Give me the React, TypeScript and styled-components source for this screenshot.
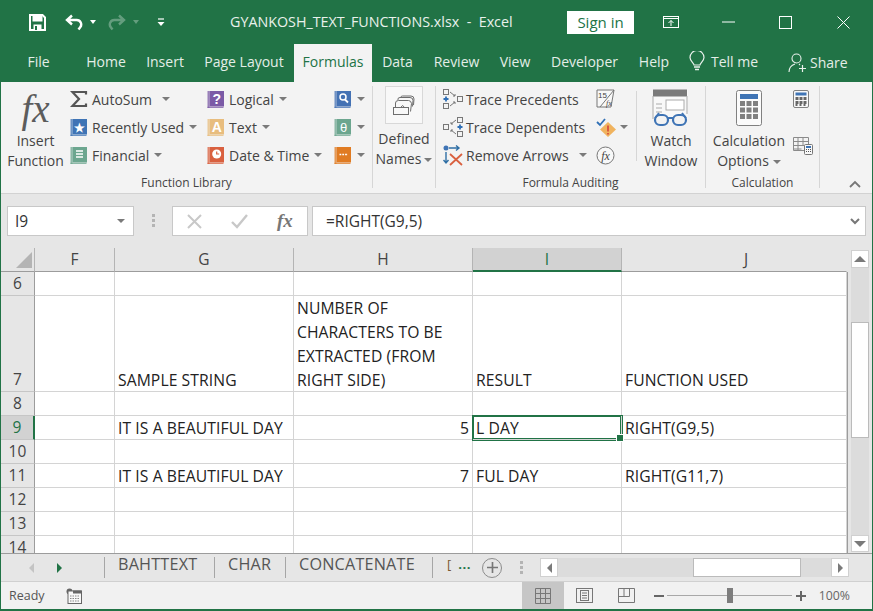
import React from 'react';
import styled, { createGlobalStyle } from 'styled-components';

const GREEN = '#217346';
const FONT = '"Open Sans", "Noto Sans", sans-serif';

const GlobalStyle = createGlobalStyle`
    html, body { margin: 0; padding: 0; background: ${GREEN}; }
    * { box-sizing: border-box; }
`;

const Window = styled.div`
    width: 873px;
    height: 611px;
    display: flex;
    flex-direction: column;
    border: 1px solid ${GREEN};
    border-top: 0;
    border-bottom-width: 2px;
    font-family: ${FONT};
    font-size: 14px;
    color: #444;
    overflow: hidden;
    background: #e6e6e6;
`;

/* title bar */
const TitleBar = styled.div`
    height: 44px;
    flex: none;
    display: flex;
    align-items: center;
    background: ${GREEN};
    color: #e9f1ec;
`;
const QuickAccess = styled.div`
    width: 229px;
    flex: none;
    display: flex;
    align-items: center;
    padding-left: 28px;
`;
const Title = styled.div`
    width: 337px;
    flex: none;
    font-size: 14.3px;
    padding-bottom: 2px;
    white-space: pre;
`;
const SignIn = styled.div`
    width: 67px;
    height: 23px;
    flex: none;
    background: #fff;
    color: ${GREEN};
    font-size: 15px;
    line-height: 22px;
    text-align: center;
    margin-right: 8px;
`;
const WinButton = styled.div`
    width: 57.5px;
    flex: none;
    display: flex;
    justify-content: center;
    align-items: center;
`;

/* tabs */
const TabBar = styled.div`
    height: 38px;
    flex: none;
    display: flex;
    background: ${GREEN};
    color: #e4eee8;
    font-size: 14px;
`;
const Tab = styled.div<{ $w: number; $active?: boolean }>`
    width: ${({ $w }) => $w}px;
    flex: none;
    padding-top: 8px;
    text-align: center;
    white-space: nowrap;
    ${({ $active }) => $active && `background: #f3f3f3; color: ${GREEN};`}
`;
const TellMe = styled.div`
    width: 99px;
    flex: none;
    display: flex;
    align-items: flex-start;
    gap: 6px;
    padding-top: 8px;
    margin-left: 10px;
    white-space: nowrap;
`;
const Share = styled(TellMe)`
    width: auto;
    margin-left: 0;
    gap: 2px;
    padding-top: 9px;
`;

/* ribbon */
const Ribbon = styled.div`
    height: 112px;
    flex: none;
    display: flex;
    background: #f3f3f3;
    border-bottom: 1px solid #d2d2d2;
`;
const Group = styled.div<{ $w: number }>`
    width: ${({ $w }) => $w}px;
    flex: none;
    display: flex;
    flex-direction: column;
    position: relative;
    &::after {
        content: '';
        position: absolute;
        right: 0;
        top: 4px;
        bottom: 5px;
        width: 1px;
        background: #d6d6d6;
    }
`;
const GroupBody = styled.div`
    height: 91px;
    display: flex;
    padding-top: 3px;
`;
const GroupLabel = styled.div`
    font-size: 12px;
    line-height: 20px;
    text-align: center;
    color: #444;
    padding-right: 1px;
`;
const Column = styled.div<{ $w: number; $pad?: number }>`
    width: ${({ $w }) => $w}px;
    padding-left: ${({ $pad }) => $pad ?? 0}px;
    flex: none;
`;
const SmallRow = styled.div<{ $shift?: number; $gap?: number }>`
    height: 28px;
    display: flex;
    align-items: center;
    gap: ${({ $gap }) => $gap ?? 4}px;
    white-space: nowrap;
    font-size: 14px;
    ${({ $shift }) => $shift && `margin-top: ${$shift}px;`}
`;
const LargeButton = styled.div<{ $w: number }>`
    width: ${({ $w }) => $w}px;
    flex: none;
    display: flex;
    flex-direction: column;
    align-items: center;
    line-height: 20px;
    font-size: 14px;
    white-space: nowrap;
`;
const LargeIcon = styled.div`
    height: 46px;
    display: flex;
    align-items: center;
    justify-content: center;
`;
const FxGlyph = styled.span`
    font-family: 'Liberation Serif', serif;
    font-style: italic;
    font-size: 39px;
    line-height: 45px;
    color: #5c5c5c;
`;
const Caret = styled.span<{ $gap?: number; $after?: number }>`
    display: inline-block;
    width: 0;
    height: 0;
    margin-left: ${({ $gap }) => $gap ?? 1}px;
    margin-right: ${({ $after }) => $after ?? 0}px;
    border-left: 4px solid transparent;
    border-right: 4px solid transparent;
    border-top: 4px solid #7a7a7a;
    vertical-align: middle;
`;
const NamesBox = styled.div`
    width: 38px;
    height: 38px;
    display: flex;
    align-items: center;
    justify-content: center;
    background: #f8f8f8;
    border: 1px solid #d8d8d8;
`;
const NamesIconWrap = styled.div`
    height: 44px;
    padding-top: 1px;
`;
const Divider = styled.div`
    width: 1px;
    height: 70px;
    margin: 6px 0 0 0;
    background: #d6d6d6;
    flex: none;
`;
const CollapseWrap = styled.div`
    flex: 1;
    display: flex;
    justify-content: flex-end;
    align-items: flex-end;
    padding: 0 11px 5px 0;
`;

/* formula bar */
const FormulaBar = styled.div`
    height: 54px;
    flex: none;
    display: flex;
    align-items: flex-start;
    padding: 12px 6px 0 6px;
    background: #e6e6e6;
`;
const Field = styled.div<{ $w?: number }>`
    ${({ $w }) => ($w ? `width: ${$w}px; flex: none;` : 'flex: 1;')}
    height: 30px;
    display: flex;
    align-items: center;
    background: #fff;
    border: 1px solid #c8c8c8;
    color: #333;
    font-size: 15.5px;
`;
const NameText = styled.span`
    flex: 1;
    padding-left: 7px;
`;
const Grip = styled.div`
    width: 38px;
    flex: none;
    display: flex;
    flex-direction: column;
    align-items: center;
    gap: 2px;
    padding-top: 8px;
    span {
        width: 3px;
        height: 3px;
        background: #b4b4b4;
    }
`;
const FormulaButtons = styled(Field)`
    padding-left: 14px;
    margin-right: 4px;
    gap: 29px;
`;
const FormulaFx = styled.span`
    font-family: 'Liberation Serif', serif;
    font-style: italic;
    font-weight: bold;
    font-size: 19px;
    color: #777;
`;
const FormulaText = styled.span`
    flex: 1;
    padding-left: 13px;
`;
const FieldChevron = styled.span`
    display: flex;
    margin-right: 5px;
`;

/* sheet */
const SheetArea = styled.div`
    flex: 1;
    min-height: 0;
    display: flex;
`;
const Sheet = styled.div`
    width: 846px;
    flex: none;
    overflow: hidden;
    display: grid;
    grid-template-columns: 34px 80px 179px 179px 149px 225px;
    grid-auto-rows: min-content;
    align-content: start;
    background: #fff;
    color: #222;
    font-size: 15.7px;
    letter-spacing: 0.08px;
`;
const Corner = styled.div`
    height: 24px;
    background: #e6e6e6;
    border-bottom: 1px solid #9c9c9c;
    display: flex;
    justify-content: flex-end;
    align-items: flex-end;
    padding: 0 2px 3px 0;
    border-right: 1px solid #b4b4b4;
`;
const ColHead = styled.div<{ $selected?: boolean; $last?: boolean }>`
    height: 24px;
    line-height: 23px;
    text-align: center;
    font-size: 15.5px;
    color: ${({ $selected }) => ($selected ? GREEN : '#444')};
    background: ${({ $selected }) => ($selected ? '#d2d2d2' : '#e6e6e6')};
    border-right: 1px solid ${({ $last }) => ($last ? 'transparent' : '#b4b4b4')};
    border-bottom: ${({ $selected }) => ($selected ? `2px solid ${GREEN}` : '1px solid #9c9c9c')};
    padding-left: ${({ $last }) => ($last ? 24 : 0)}px;
`;
const RowHead = styled.div<{ $selected?: boolean; $h: number }>`
    height: ${({ $h }) => $h}px;
    display: flex;
    align-items: flex-end;
    justify-content: center;
    line-height: 23px;
    font-size: 15.5px;
    color: ${({ $selected }) => ($selected ? GREEN : '#444')};
    background: ${({ $selected }) => ($selected ? '#d2d2d2' : '#e6e6e6')};
    border-bottom: 1px solid #c6c6c6;
    border-right: ${({ $selected }) => ($selected ? `2px solid ${GREEN}` : '1px solid #9c9c9c')};
`;
const Cell = styled.div<{ $h: number; $right?: boolean; $selected?: boolean }>`
    height: ${({ $h }) => $h}px;
    position: relative;
    display: flex;
    align-items: flex-end;
    justify-content: ${({ $right }) => ($right ? 'flex-end' : 'flex-start')};
    padding: 0 3px;
    line-height: 24px;
    white-space: pre-line;
    border-right: 1px solid #d4d4d4;
    border-bottom: 1px solid #d4d4d4;
    ${({ $selected }) =>
        $selected &&
        `
        box-shadow: 0 0 0 1px ${GREEN}, inset 0 0 0 1px ${GREEN};
        z-index: 1;
        &::after {
            content: '';
            position: absolute;
            right: -3px;
            bottom: -3px;
            width: 6px;
            height: 6px;
            background: ${GREEN};
            border: 1px solid #fff;
        }
    `}
`;
const CellText = styled.span`
    margin-bottom: -1px;
`;
const LastColCap = styled.div`
    width: 1px;
    flex: none;
    background: #9c9c9c;
    margin-top: 24px;
`;

const VScroll = styled.div`
    flex: 1;
    display: flex;
    flex-direction: column;
    padding: 2px 3px 1px 3px;
    background: #e6e6e6;
`;
const ScrollButton = styled.div<{ $w?: number; $h?: number }>`
    ${({ $w }) => $w && `width: ${$w}px;`}
    ${({ $h }) => $h && `height: ${$h}px;`}
    flex: none;
    display: flex;
    align-items: center;
    justify-content: center;
    background: #fff;
    border: 1px solid #d0d0d0;
`;
const VTrack = styled.div`
    flex: 1;
    background: #dcdcdc;
    display: flex;
    flex-direction: column;
`;
const VThumb = styled.div`
    height: 116px;
    margin-top: 54px;
    background: #fff;
    border: 1px solid #bbb;
`;
const Arrow = styled.span<{ $dir: 'up' | 'down' | 'left' | 'right'; $color?: string }>`
    width: 0;
    height: 0;
    border-style: solid;
    ${({ $dir, $color }) => {
        const c = $color ?? '#7a7a7a';
        if ($dir === 'up') return `border-width: 0 6px 6px 6px; border-color: transparent transparent ${c} transparent;`;
        if ($dir === 'down') return `border-width: 6px 6px 0 6px; border-color: ${c} transparent transparent transparent;`;
        if ($dir === 'left') return `border-width: 5px 5px 5px 0; border-color: transparent ${c} transparent transparent;`;
        return `border-width: 5px 0 5px 5px; border-color: transparent transparent transparent ${c};`;
    }}
`;

/* sheet tabs */
const SheetTabs = styled.div`
    height: 29px;
    flex: none;
    display: flex;
    align-items: center;
    background: #e6e6e6;
    border-top: 1px solid #9c9c9c;
    border-bottom: 1px solid #d0d0d0;
`;
const TabNav = styled.div`
    width: 103px;
    height: 100%;
    flex: none;
    display: flex;
    align-items: center;
    gap: 23px;
    padding-left: 28px;
`;
const SheetTab = styled.div<{ $w: number }>`
    width: ${({ $w }) => $w}px;
    height: 21px;
    flex: none;
    border-left: 1px solid #a6a6a6;
    padding-left: 13px;
    font-size: 16.2px;
    letter-spacing: 0.2px;
    line-height: 15px;
    color: #555;
    white-space: nowrap;
`;
const MoreTabs = styled.div`
    width: 43px;
    height: 21px;
    flex: none;
    border-left: 1px solid #a6a6a6;
    padding-left: 14px;
    display: flex;
    gap: 7px;
    font-size: 13px;
    line-height: 15px;
    color: #7a5a30;
    span {
        color: ${GREEN};
        font-weight: 700;
        letter-spacing: 0.5px;
    }
`;
const AddSheet = styled.div`
    width: 20px;
    height: 20px;
    flex: none;
    margin-left: 7px;
    border: 1px solid #8c8c8c;
    border-radius: 50%;
    display: flex;
    align-items: center;
    justify-content: center;
`;
const TabGrip = styled(Grip)`
    width: 38px;
    gap: 2px;
    padding-top: 0;
`;
const HScroll = styled.div`
    width: 309px;
    height: 19px;
    flex: none;
    display: flex;
    background: #dcdcdc;
`;
const HThumb = styled.div`
    width: 108px;
    height: 19px;
    margin-left: 135px;
    background: #fff;
    border: 1px solid #bbb;
`;
const HSpacer = styled.div`
    flex: 1;
`;

/* status bar */
const StatusBar = styled.div`
    flex: none;
    height: 27px;
    display: flex;
    align-items: center;
    background: #f1f1f1;
    color: #555;
    font-size: 12.5px;
`;
const Ready = styled.span`
    width: 65px;
    flex: none;
    padding-left: 8px;
`;
const StatusSpacer = styled.div`
    flex: 1;
`;
const ViewButton = styled.div<{ $active?: boolean; $w: number }>`
    width: ${({ $w }) => $w}px;
    height: 100%;
    flex: none;
    display: flex;
    align-items: center;
    justify-content: center;
    background: ${({ $active }) => ($active ? '#c6c6c6' : 'transparent')};
`;
const ZoomOut = styled.span`
    display: flex;
    margin-left: 6px;
`;
const ZoomSlider = styled.div`
    width: 125px;
    height: 1px;
    flex: none;
    margin: 0 4px 0 3px;
    background: #a8a8a8;
    position: relative;
`;
const ZoomThumb = styled.div`
    position: absolute;
    left: 60px;
    top: -7px;
    width: 6px;
    height: 15px;
    background: #7d7d7d;
`;
const ZoomLabel = styled.span`
    flex: none;
    margin-left: 13px;
    padding-right: 22px;
    white-space: nowrap;
    color: #666;
    font-size: 12.3px;
`;

/* icons */
const Book = ({ color, children }: { color: string; children?: React.ReactNode }) => (
    <svg width="18" height="19" viewBox="0 0 18 19">
        <rect x="0.5" y="1" width="2" height="17" fill={color} opacity="0.75" />
        <rect x="0.5" y="16.8" width="16" height="1.2" fill={color} opacity="0.75" />
        <rect x="2.5" y="1" width="14.5" height="15.5" fill={color} />
        {children}
    </svg>
);
const BookLetter = ({ ch, size = 14, bold = true }: { ch: string; size?: number; bold?: boolean }) => (
    <text x="9.7" y="13.5" fontSize={size} fontWeight={bold ? 700 : 400} fill="#fff" textAnchor="middle" fontFamily="Liberation Sans">
        {ch}
    </text>
);

const Sigma = () => (
    <svg width="18" height="18" viewBox="0 0 18 18">
        <path d="M16 4.5V2H2.5L9 9l-6.5 7H16v-2.5" fill="none" stroke="#555" strokeWidth="2.2" />
    </svg>
);
const SaveIcon = () => (
    <svg width="17" height="17" viewBox="0 0 17 17" style={{ marginRight: 19 }}>
        <path d="M1 1h12.5L16 3.5V16H1z" fill="none" stroke="#fff" strokeWidth="2" />
        <rect x="3.5" y="1.5" width="10" height="6" fill="#fff" />
        <rect x="4.5" y="10.5" width="8" height="5.5" fill="#fff" />
        <rect x="6" y="12" width="2" height="4" fill={GREEN} />
    </svg>
);
const UndoIcon = ({ faded }: { faded?: boolean }) => (
    <svg
        width="18"
        height="17"
        viewBox="0 0 18 17"
        style={{ transform: faded ? 'scaleX(-1)' : undefined, opacity: faded ? 0.3 : 1 }}
    >
        <path d="M7 1.5L2 6l5 4.5M2 6h9.5a4.5 4.5 0 0 1 3.5 7.5L13.5 15.5" fill="none" stroke="#fff" strokeWidth="2.4" />
    </svg>
);
const QatCaret = styled.span<{ $faded?: boolean; $m: number }>`
    width: 0;
    height: 0;
    margin: 0 ${({ $m }) => $m}px 0 7px;
    border-left: 3.5px solid transparent;
    border-right: 3.5px solid transparent;
    border-top: 4px solid #fff;
    opacity: ${({ $faded }) => ($faded ? 0.3 : 1)};
`;
const Customize = () => (
    <svg width="8" height="9" viewBox="0 0 8 9">
        <path d="M1 1h6" stroke="#fff" strokeWidth="1.2" />
        <path d="M0.5 4h7L4 8z" fill="#fff" />
    </svg>
);
const RibbonDisplayIcon = () => (
    <svg width="16" height="13" viewBox="0 0 16 13">
        <rect x="0.5" y="0.5" width="15" height="11" fill="none" stroke="#fff" />
        <path d="M1 2.5h14M8 10V4.5M5.5 7L8 4.5 10.5 7" fill="none" stroke="#fff" />
    </svg>
);
const MinIcon = () => (
    <svg width="13" height="2" viewBox="0 0 13 2">
        <path d="M0 1h13" stroke="#fff" />
    </svg>
);
const MaxIcon = () => (
    <svg width="13" height="13" viewBox="0 0 13 13">
        <rect x="0.5" y="0.5" width="12" height="12" fill="none" stroke="#fff" />
    </svg>
);
const CloseIcon = () => (
    <svg width="13" height="13" viewBox="0 0 13 13">
        <path d="M0.5 0.5l12 12M12.5 0.5l-12 12" stroke="#fff" />
    </svg>
);
const BulbIcon = () => (
    <svg width="16" height="21" viewBox="0 0 16 21" style={{ marginTop: -1 }}>
        <path d="M5 14c0-2-4-4-4-7.5A7 7 0 0 1 15 6.5C15 10 11 12 11 14z" fill="none" stroke="#e9f1ec" strokeWidth="1.2" />
        <path d="M5 16h6M6 18.5h4" stroke="#e9f1ec" strokeWidth="1.4" />
    </svg>
);
const PersonIcon = () => (
    <svg width="20" height="20" viewBox="0 0 20 20">
        <circle cx="8.5" cy="5.5" r="4.5" fill="none" stroke="#e9f1ec" strokeWidth="1.1" />
        <path d="M1 19c0-4 3-7 6-8M11 11l1 1" fill="none" stroke="#e9f1ec" strokeWidth="1.1" />
        <path d="M14.5 12v7M11 15.5h7" stroke="#e9f1ec" strokeWidth="1.2" />
    </svg>
);
const TraceIcon = ({ flip }: { flip?: boolean }) => (
    <svg width="20" height="20" viewBox="0 0 20 20" style={{ transform: flip ? 'scaleX(-1)' : undefined }}>
        <g fill="none" stroke="#777" strokeWidth="1">
            <rect x="0.5" y="0.5" width="5" height="5" />
            <rect x="0.5" y="14.5" width="5" height="5" />
            <rect x="14.5" y="7.5" width="5" height="5" />
            <path d="M7 3l5 4M10 7h2V5M7 17l5-4M10 13h2v2" />
        </g>
        <path d="M3 7.5v5M0.5 10h5" stroke="#2f6fb5" strokeWidth="1.8" />
    </svg>
);
const RemoveArrowsIcon = () => (
    <svg width="21" height="21" viewBox="0 0 21 21">
        <circle cx="3" cy="3" r="2.5" fill="#3f74b5" />
        <path d="M6 3h10M13 0.5L16 3l-3 2.5M3 7v11M0.5 15L3 18l2.5-3" fill="none" stroke="#2f6fa5" strokeWidth="1.4" />
        <path d="M7 9l12 11M19 9L7 20" stroke="#d9603f" strokeWidth="1.8" />
    </svg>
);
const ShowFormulasIcon = () => (
    <svg width="20" height="20" viewBox="0 0 20 20">
        <path d="M1 1h17L15 18H1z" fill="#f8f8f8" stroke="#777" />
        <path d="M18 1L4 18" stroke="#777" />
        <text x="2" y="9" fontSize="8" fill="#444" fontFamily="Liberation Sans">15</text>
        <text x="10" y="17" fontSize="8" fontStyle="italic" fill="#444" fontFamily="Liberation Serif">fx</text>
    </svg>
);
const ErrorCheckIcon = () => (
    <svg width="21" height="19" viewBox="0 0 21 19">
        <path d="M1 4l3 3 5-6" fill="none" stroke="#2f6fb5" strokeWidth="1.8" />
        <path d="M12 4l8 7.5-8 7.5-8-7.5z" fill="#f0b35e" />
        <path d="M12 7.5v6M12 15v1.5" stroke="#d9503f" strokeWidth="1.8" />
    </svg>
);
const EvaluateIcon = () => (
    <svg width="19" height="19" viewBox="0 0 19 19">
        <circle cx="9.5" cy="9.5" r="8.5" fill="#f8f8f8" stroke="#777" />
        <text x="9.5" y="13.5" fontSize="12" fontStyle="italic" fill="#444" textAnchor="middle" fontFamily="Liberation Serif">fx</text>
    </svg>
);
const NamesIcon = () => (
    <svg width="22" height="21" viewBox="0 0 22 21">
        <g fill="none" stroke="#6e6e6e" strokeWidth="1">
            <rect x="0.5" y="12.5" width="15" height="7" fill="#f8f8f8" />
            <path d="M2.5 12V8q0-2.5 3-2.5h10q2.5 0 3 3l-1 8" />
            <path d="M5 5V4q0-1.5 2-1.5h10q3 0 3 3l-.5 6" />
            <path d="M8 2q0-1 1.5-1H18q3 0 3 3l-.5 6" />
            <path d="M8 12q2-3 3 0" />
        </g>
    </svg>
);
const WatchIcon = () => (
    <svg width="38" height="38" viewBox="0 0 38 38">
        <rect x="1" y="0.5" width="35" height="30" fill="#f8f8f8" />
        <rect x="1" y="0.5" width="34" height="7" fill="#7a7a7a" />
        <path d="M1 7v23M35 7v18" stroke="#aaa" fill="none" />
        <path d="M4 15h6M4 19h6M4 23h6" stroke="#aaa" />
        <rect x="14" y="11" width="18" height="10" fill="#fff" stroke="#aaa" />
        <rect x="3" y="26" width="13" height="10" rx="5" fill="#f3f3f3" stroke="#3f74b5" strokeWidth="2.2" />
        <rect x="21" y="26" width="13" height="10" rx="5" fill="#f3f3f3" stroke="#3f74b5" strokeWidth="2.2" />
        <path d="M16 29h5M3 29l4-5M34 29l-4-5" stroke="#3f74b5" strokeWidth="2" fill="none" />
    </svg>
);
const CalcGrid = ({ x, y, cell, gap, cols, rows, fill }: { x: number; y: number; cell: number; gap: number; cols: number; rows: number; fill: string }) => (
    <>
        {Array.from({ length: rows * cols }, (_, i) => (
            <rect
                key={i}
                x={x + (i % cols) * (cell + gap)}
                y={y + Math.floor(i / cols) * (cell + gap)}
                width={cell}
                height={cell}
                fill={fill}
            />
        ))}
    </>
);
const CalcIcon = () => (
    <svg width="26" height="36" viewBox="0 0 26 36">
        <rect x="0.5" y="0.5" width="25" height="35" rx="2" fill="#fbfbfb" stroke="#808080" />
        <rect x="4" y="4" width="18" height="5" fill="#3f74b5" />
        <CalcGrid x={4} y={11} cell={5} gap={1.5} cols={3} rows={3} fill="#808080" />
    </svg>
);
const CalcSmallIcon = () => (
    <svg width="16" height="18" viewBox="0 0 16 18">
        <rect x="0.5" y="0.5" width="15" height="17" rx="1.5" fill="#f8f8f8" stroke="#808080" />
        <rect x="2.5" y="2.5" width="11" height="3" fill="#3f74b5" />
        <CalcGrid x={2.5} y={7} cell={3} gap={1} cols={3} rows={2} fill="#666" />
        <CalcGrid x={2.5} y={14} cell={2} gap={2} cols={3} rows={1} fill="#666" />
    </svg>
);
const CalcSheetIcon = () => (
    <svg width="20" height="18" viewBox="0 0 20 18">
        <g fill="none" stroke="#8a8a8a">
            <path d="M0.5 0.5h15v13h-15zM0.5 4.5h15M0.5 8.5h11M0.5 12h8M5 0.5v13M10 0.5v8" />
        </g>
        <rect x="11.5" y="7.5" width="8" height="10" rx="1" fill="#f8f8f8" stroke="#777" />
        <rect x="13" y="9" width="5" height="2" fill="#3f74b5" />
        <CalcGrid x={13} y={12} cell={1} gap={1} cols={3} rows={2} fill="#555" />
    </svg>
);
const ChevronUp = () => (
    <svg width="12" height="8" viewBox="0 0 12 8">
        <path d="M1 7l5-5 5 5" fill="none" stroke="#777" strokeWidth="1.8" />
    </svg>
);
const ChevronDown = () => (
    <svg width="10" height="7" viewBox="0 0 10 7">
        <path d="M1 1l4 4 4-4" fill="none" stroke="#777" strokeWidth="2" />
    </svg>
);
const CrossIcon = () => (
    <svg width="15" height="15" viewBox="0 0 15 15">
        <path d="M1 1l13 13M14 1L1 14" stroke="#c8c8c8" strokeWidth="2" />
    </svg>
);
const TickIcon = () => (
    <svg width="17" height="15" viewBox="0 0 17 15">
        <path d="M1 8l5 5L16 1" fill="none" stroke="#c8c8c8" strokeWidth="2.4" />
    </svg>
);
const CornerTriangle = () => (
    <svg width="16" height="16" viewBox="0 0 16 16">
        <path d="M16 0v16H0z" fill="#b4b4b4" />
    </svg>
);
const MacroIcon = () => (
    <svg width="16" height="16" viewBox="0 0 16 16">
        <circle cx="3.5" cy="3.5" r="3" fill="#666" />
        <rect x="2" y="3" width="13.5" height="12.5" fill="#f8f8f8" stroke="#666" />
        <rect x="7" y="2.5" width="8.5" height="3" fill="#666" />
        <path d="M4 8h10M4 10.5h10M4 13h10" stroke="#888" strokeDasharray="1.5 1" />
    </svg>
);
const NormalViewIcon = () => (
    <svg width="16" height="16" viewBox="0 0 16 16">
        <path d="M0.5 0.5h15v15h-15zM5.5 0.5v15M10.5 0.5v15M0.5 5.5h15M0.5 10.5h15" fill="none" stroke="#777" />
    </svg>
);
const PageViewIcon = () => (
    <svg width="17" height="15" viewBox="0 0 17 15">
        <rect x="0.5" y="0.5" width="16" height="14" fill="none" stroke="#777" />
        <rect x="4.5" y="2.5" width="8" height="10" fill="none" stroke="#777" />
        <path d="M6 5h5M6 7.5h5M6 10h5" stroke="#777" />
    </svg>
);
const BreakViewIcon = () => (
    <svg width="17" height="15" viewBox="0 0 17 15">
        <path d="M0.5 0.5h16v14h-16zM0.5 8.5h11M6 0.5v8M11.5 0.5v8" fill="none" stroke="#777" />
    </svg>
);
const PlusMinus = ({ plus, size = 10, color = '#666', weight = 2 }: { plus?: boolean; size?: number; color?: string; weight?: number }) => (
    <svg width={size} height={size} viewBox="0 0 10 10">
        <path d={plus ? 'M0 5h10M5 0v10' : 'M0 5h10'} stroke={color} strokeWidth={weight} />
    </svg>
);

const rows = [
    { n: '6', h: 24, cells: ['', '', '', '', ''] },
    {
        n: '7',
        h: 96,
        cells: ['', 'SAMPLE STRING', 'NUMBER OF\nCHARACTERS TO BE\nEXTRACTED (FROM\nRIGHT SIDE)', 'RESULT', 'FUNCTION USED'],
    },
    { n: '8', h: 24, cells: ['', '', '', '', ''] },
    { n: '9', h: 24, cells: ['', 'IT IS A BEAUTIFUL DAY', '5', 'L DAY', 'RIGHT(G9,5)'] },
    { n: '10', h: 24, cells: ['', '', '', '', ''] },
    { n: '11', h: 24, cells: ['', 'IT IS A BEAUTIFUL DAY', '7', 'FUL DAY', 'RIGHT(G11,7)'] },
    { n: '12', h: 24, cells: ['', '', '', '', ''] },
    { n: '13', h: 24, cells: ['', '', '', '', ''] },
    { n: '14', h: 24, cells: ['', '', '', '', ''] },
];
const columns = ['F', 'G', 'H', 'I', 'J'];
const tabs: [string, number, boolean?][] = [
    ['File', 75],
    ['Home', 60],
    ['Insert', 58],
    ['Page Layout', 100],
    ['Formulas', 78, true],
    ['Data', 51],
    ['Review', 67],
    ['View', 50],
    ['Developer', 89],
    ['Help', 50],
];

export default function App() {
    return (
        <Window>
            <GlobalStyle />
            <TitleBar>
                <QuickAccess>
                    <SaveIcon />
                    <UndoIcon />
                    <QatCaret $m={12} />
                    <UndoIcon faded />
                    <QatCaret $faded $m={18} />
                    <Customize />
                </QuickAccess>
                <Title>GYANKOSH_TEXT_FUNCTIONS.xlsx  -  Excel</Title>
                <SignIn>Sign in</SignIn>
                <WinButton><RibbonDisplayIcon /></WinButton>
                <WinButton><MinIcon /></WinButton>
                <WinButton><MaxIcon /></WinButton>
                <WinButton><CloseIcon /></WinButton>
            </TitleBar>

            <TabBar>
                {tabs.map(([label, w, active]) => (
                    <Tab key={label} $w={w} $active={active}>{label}</Tab>
                ))}
                <TellMe><BulbIcon />Tell me</TellMe>
                <Share><PersonIcon />Share</Share>
            </TabBar>

            <Ribbon>
                <Group $w={372}>
                    <GroupBody>
                        <LargeButton $w={69}>
                            <LargeIcon><FxGlyph>fx</FxGlyph></LargeIcon>
                            <span>Insert</span>
                            <span>Function</span>
                        </LargeButton>
                        <Column $w={136}>
                            <SmallRow><Sigma />AutoSum<Caret $gap={6} /></SmallRow>
                            <SmallRow>
                                <Book color="#3f74b5"><BookLetter ch="★" size={12} /></Book>Recently Used<Caret />
                            </SmallRow>
                            <SmallRow>
                                <Book color="#6ca68f">
                                    <path d="M6 5h7M6 8h7M6 11h7" stroke="#fff" strokeWidth="1.5" />
                                </Book>
                                Financial<Caret />
                            </SmallRow>
                        </Column>
                        <Column $w={128} $pad={1}>
                            <SmallRow>
                                <Book color="#7b5aa6"><BookLetter ch="?" /></Book>Logical<Caret />
                            </SmallRow>
                            <SmallRow>
                                <Book color="#e8bd7e"><BookLetter ch="A" /></Book>Text<Caret />
                            </SmallRow>
                            <SmallRow>
                                <Book color="#d9603f">
                                    <circle cx="9.7" cy="8" r="4.5" fill="#fff" />
                                    <path d="M9.7 5.5V8h2.5" fill="none" stroke="#d9603f" strokeWidth="1.2" />
                                </Book>
                                Date &amp; Time<Caret />
                            </SmallRow>
                        </Column>
                        <Column $w={38}>
                            <SmallRow>
                                <Book color="#4472b4">
                                    <circle cx="9" cy="7" r="3" fill="none" stroke="#fff" strokeWidth="1.5" />
                                    <path d="M11 9.5l3 3" stroke="#fff" strokeWidth="1.8" />
                                </Book>
                                <Caret />
                            </SmallRow>
                            <SmallRow>
                                <Book color="#6ca68f"><BookLetter ch="θ" size={13} bold={false} /></Book><Caret />
                            </SmallRow>
                            <SmallRow>
                                <Book color="#e07b22">
                                    <path d="M5.5 8.5h8.5" stroke="#fff" strokeWidth="1.6" strokeDasharray="1.8 1" />
                                </Book>
                                <Caret />
                            </SmallRow>
                        </Column>
                    </GroupBody>
                    <GroupLabel>Function Library</GroupLabel>
                </Group>

                <Group $w={63}>
                    <GroupBody>
                        <LargeButton $w={62}>
                            <NamesIconWrap>
                                <NamesBox><NamesIcon /></NamesBox>
                            </NamesIconWrap>
                            <span>Defined</span>
                            <span>Names<Caret $gap={3} /></span>
                        </LargeButton>
                    </GroupBody>
                    <GroupLabel>&nbsp;</GroupLabel>
                </Group>

                <Group $w={270}>
                    <GroupBody>
                        <Column $w={160} $pad={7}>
                            <SmallRow $gap={3}><TraceIcon />Trace Precedents</SmallRow>
                            <SmallRow $gap={3}><TraceIcon flip />Trace Dependents</SmallRow>
                            <SmallRow $gap={2}><RemoveArrowsIcon />Remove Arrows<Caret $gap={8} /></SmallRow>
                        </Column>
                        <Column $w={40}>
                            <SmallRow><ShowFormulasIcon /></SmallRow>
                            <SmallRow><ErrorCheckIcon /><Caret $gap={-1} /></SmallRow>
                            <SmallRow><EvaluateIcon /></SmallRow>
                        </Column>
                        <Divider />
                        <LargeButton $w={68}>
                            <LargeIcon><WatchIcon /></LargeIcon>
                            <span>Watch</span>
                            <span>Window</span>
                        </LargeButton>
                    </GroupBody>
                    <GroupLabel>Formula Auditing</GroupLabel>
                </Group>

                <Group $w={114}>
                    <GroupBody>
                        <LargeButton $w={86}>
                            <LargeIcon><CalcIcon /></LargeIcon>
                            <span>Calculation</span>
                            <span>Options<Caret $gap={4} /></span>
                        </LargeButton>
                        <Column $w={26} $pad={1}>
                            <SmallRow><CalcSmallIcon /></SmallRow>
                            <SmallRow />
                            <SmallRow $shift={-9}><CalcSheetIcon /></SmallRow>
                        </Column>
                    </GroupBody>
                    <GroupLabel>Calculation</GroupLabel>
                </Group>

                <CollapseWrap><ChevronUp /></CollapseWrap>
            </Ribbon>

            <FormulaBar>
                <Field $w={127}>
                    <NameText>I9</NameText>
                    <Caret $after={8} />
                </Field>
                <Grip><span /><span /><span /></Grip>
                <FormulaButtons $w={136}>
                    <CrossIcon />
                    <TickIcon />
                    <FormulaFx>fx</FormulaFx>
                </FormulaButtons>
                <Field>
                    <FormulaText>=RIGHT(G9,5)</FormulaText>
                    <FieldChevron><ChevronDown /></FieldChevron>
                </Field>
            </FormulaBar>

            <SheetArea>
                <Sheet>
                    <Corner><CornerTriangle /></Corner>
                    {columns.map(c => (
                        <ColHead key={c} $selected={c === 'I'} $last={c === 'J'}>{c}</ColHead>
                    ))}
                    {rows.map(row => (
                        <React.Fragment key={row.n}>
                            <RowHead $h={row.h} $selected={row.n === '9'}>{row.n}</RowHead>
                            {row.cells.map((text, i) => (
                                <Cell
                                    key={i}
                                    $h={row.h}
                                    $right={i === 2 && (row.n === '9' || row.n === '11')}
                                    $selected={i === 3 && row.n === '9'}
                                >
                                    {text && <CellText>{text}</CellText>}
                                </Cell>
                            ))}
                        </React.Fragment>
                    ))}
                </Sheet>
                <LastColCap />
                <VScroll>
                    <ScrollButton $h={18}><Arrow $dir="up" /></ScrollButton>
                    <VTrack><VThumb /></VTrack>
                    <ScrollButton $h={17}><Arrow $dir="down" /></ScrollButton>
                </VScroll>
            </SheetArea>

            <SheetTabs>
                <TabNav>
                    <Arrow $dir="left" $color="#c4c4c4" />
                    <Arrow $dir="right" $color={GREEN} />
                </TabNav>
                <SheetTab $w={110}>BAHTTEXT</SheetTab>
                <SheetTab $w={71}>CHAR</SheetTab>
                <SheetTab $w={147}>CONCATENATE</SheetTab>
                <MoreTabs>[<span>...</span></MoreTabs>
                <AddSheet><PlusMinus plus size={11} color="#777" weight={1.5} /></AddSheet>
                <TabGrip><span /><span /><span /></TabGrip>
                <HScroll>
                    <ScrollButton $w={18}><Arrow $dir="left" /></ScrollButton>
                    <HThumb />
                    <HSpacer />
                    <ScrollButton $w={18}><Arrow $dir="right" /></ScrollButton>
                </HScroll>
            </SheetTabs>

            <StatusBar>
                <Ready>Ready</Ready>
                <MacroIcon />
                <StatusSpacer />
                <ViewButton $active $w={42}><NormalViewIcon /></ViewButton>
                <ViewButton $w={42}><PageViewIcon /></ViewButton>
                <ViewButton $w={42}><BreakViewIcon /></ViewButton>
                <ZoomOut><PlusMinus /></ZoomOut>
                <ZoomSlider><ZoomThumb /></ZoomSlider>
                <PlusMinus plus />
                <ZoomLabel>100%</ZoomLabel>
            </StatusBar>
        </Window>
    );
}
